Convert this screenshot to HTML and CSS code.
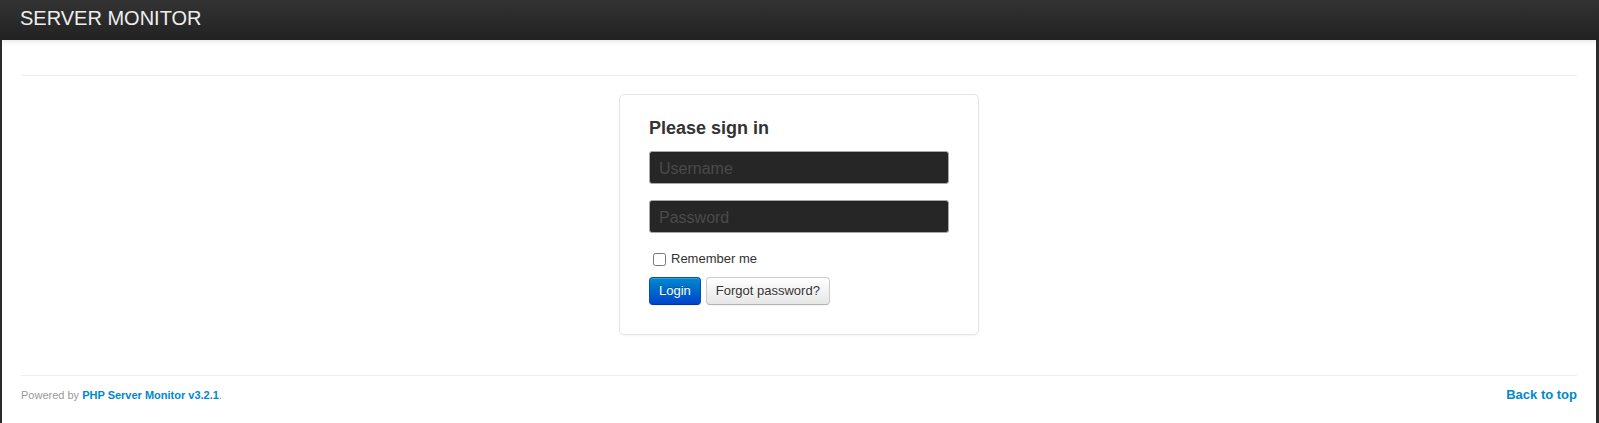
FILE: index.html
```html
<!DOCTYPE html>
<html lang="en">
<head>
<meta charset="utf-8">
<title>Server Monitor</title>
<link rel="stylesheet" href="styles.css">
</head>
<body>
<div class="navbar"><span class="brand">SERVER MONITOR</span></div>
<div class="page">
  <hr class="rule">
  <form class="signin">
    <h2 class="signin-heading">Please sign in</h2>
    <input class="field" type="text" placeholder="Username">
    <input class="field" type="password" placeholder="Password">
    <label class="remember"><input class="check" type="checkbox"><span>Remember me</span></label>
    <div class="actions">
      <button class="btn btn-primary" type="button">Login</button>
      <button class="btn" type="button">Forgot password?</button>
    </div>
  </form>
  <hr class="rule">
  <div class="footer">
    <p class="powered">Powered by <a class="link" href="#">PHP Server Monitor v3.2.1</a>.</p>
    <a class="link top" href="#">Back to top</a>
  </div>
</div>
</body>
</html>
```
FILE: styles.css
```css
html, body {
  margin: 0;
  padding: 0;
}
body {
  background: #2b2b2b;
  font-family: "Liberation Sans", Arial, Helvetica, sans-serif;
  font-size: 13px;
  line-height: 20px;
  color: #333;
}
.navbar {
  height: 40px;
  box-sizing: border-box;
  padding: 8px 20px 12px;
  background: linear-gradient(to bottom, #333333, #222222);
  position: relative;
  z-index: 2;
  box-shadow: 0 1px 6px rgba(0, 0, 0, 0.12);
}
.brand {
  display: block;
  font-size: 20px;
  line-height: 20px;
  color: #eeeeee;
}
.page {
  background: #fff;
  margin: 0 3px 0 2px;
  padding: 35px 19px 30px;
}
.rule {
  margin: 0;
  border: 0;
  border-top: 1px solid #eeeeee;
  height: 0;
}
.signin {
  width: 360px;
  box-sizing: border-box;
  margin: 18px auto 40px;
  padding: 19px 29px 29px;
  border: 1px solid #e5e5e5;
  border-radius: 5px;
  box-shadow: 0 1px 2px rgba(0, 0, 0, 0.05);
  display: flex;
  flex-direction: column;
}
.signin-heading {
  margin: 4px 0 13px;
  font-size: 18px;
  line-height: 20px;
  font-weight: bold;
  color: #333;
}
.field {
  display: block;
  width: 300px;
  height: 33px;
  box-sizing: border-box;
  margin: 0 0 16px;
  padding: 5px 9px 3px;
  font-family: "Liberation Sans", Arial, sans-serif;
  font-size: 16px;
  color: #ccc;
  background: #262626;
  border: 1px solid #a8a8a8;
  border-radius: 3px;
  box-shadow: inset 0 1px 1px rgba(0, 0, 0, 0.075);
  outline: none;
}
.field::placeholder {
  color: #4a4a4a;
}
.remember {
  display: flex;
  align-items: center;
  height: 20px;
  margin: 0 0 8px;
  font-size: 13px;
}
.check {
  width: 13px;
  height: 13px;
  margin: 0 5px 0 4px;
}
.actions {
  display: flex;
  gap: 5px;
}
.btn {
  height: 28px;
  box-sizing: border-box;
  padding: 0 9px;
  font-family: "Liberation Sans", Arial, sans-serif;
  font-size: 13px;
  line-height: 26px;
  color: #333;
  text-shadow: 0 1px 1px rgba(255, 255, 255, 0.75);
  background: linear-gradient(to bottom, #ffffff, #e6e6e6);
  border: 1px solid #cccccc;
  border-bottom-color: #b3b3b3;
  border-radius: 4px;
  box-shadow: inset 0 1px 0 rgba(255, 255, 255, 0.2), 0 1px 2px rgba(0, 0, 0, 0.05);
}
.btn-primary {
  color: #fff;
  text-shadow: 0 -1px 0 rgba(0, 0, 0, 0.25);
  background: linear-gradient(to bottom, #0088cc, #0044cc);
  border-color: #0052b8 #0052b8 #00369a;
}
.footer {
  display: flex;
  justify-content: space-between;
  align-items: baseline;
  padding-top: 10px;
}
.powered {
  margin: 0;
  font-size: 11px;
  line-height: 18px;
  color: #999;
}
.link {
  color: #0088cc;
  font-weight: bold;
  text-decoration: none;
}
.top {
  font-size: 13px;
  line-height: 18px;
}
```
